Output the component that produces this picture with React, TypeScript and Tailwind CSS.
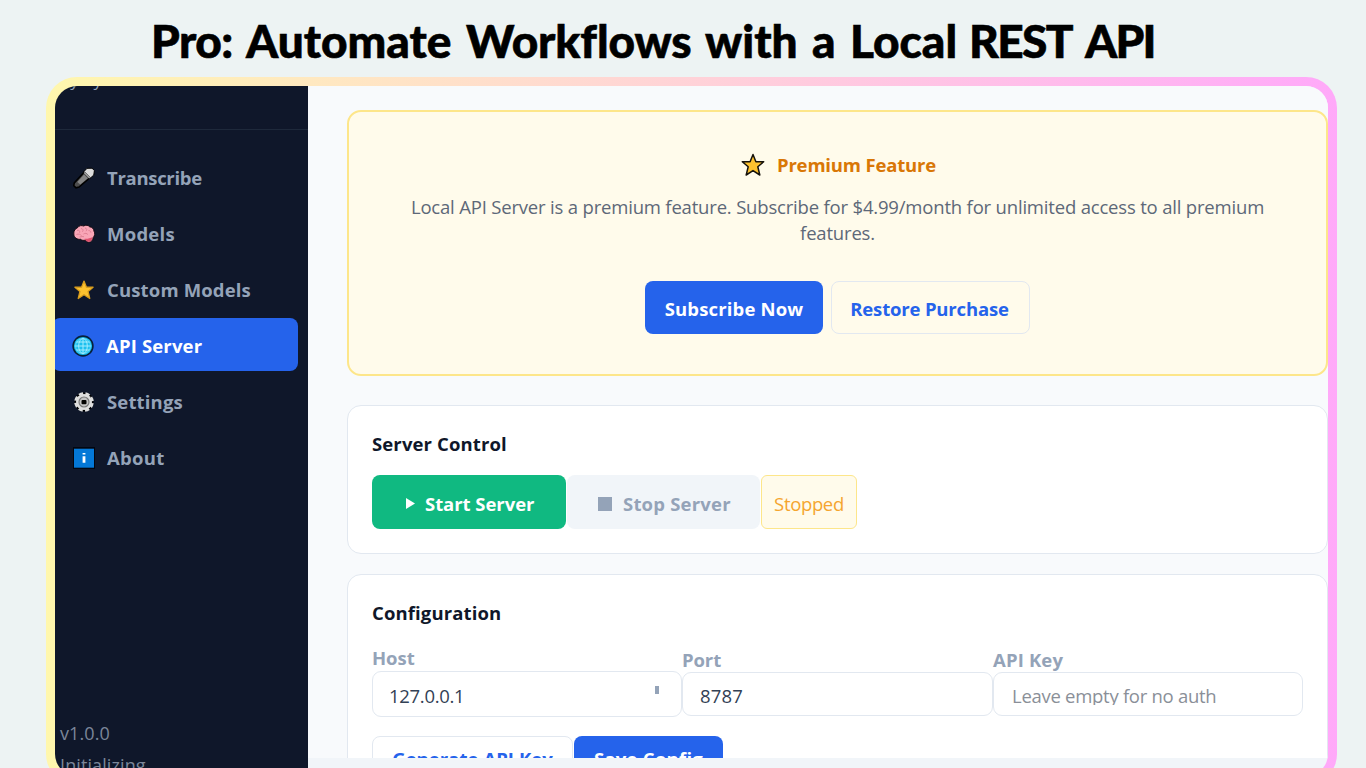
import { ReactNode } from "react"

const MicIcon = () => (
  <svg width="22" height="22" viewBox="0 0 22 22">
    <path d="M11 5.500 16.500 11 6 20l-3 .8-2.300-2.200.6-2.600z" fill="#4c4c4c" stroke="#000" strokeWidth="1.600" />
    <path d="m11 7.500 3.800 3.800-7.500 6.200L4.300 15z" fill="#858585" />
    <path
      d="m11 4.500 6.500 6.500 3.300-3 .6-4.500L19 1.200l-5 .1z"
      fill="#dcdcdc"
      stroke="#000"
      strokeWidth="1"
    />
    <path d="m11.200 5.500 5.500 5.500" stroke="#a5a5a5" strokeWidth="1.600" />
  </svg>
)

const BrainIcon = () => (
  <svg width="22" height="22" viewBox="0 0 22 22">
    <path
      d="M.8 11C.4 8 2.300 5.500 4.800 4.500c1-2 4-2.300 5.700-1.500C13 1.600 15.500 2.300 16.500 3.700c2.900.5 4.600 2.500 4.500 4.500 1.300 2 .8 4.700-.8 6.300-.2 2.800-2.200 4.800-4.400 4.800-1.500 0-2.400-1.200-3.200-2.300-2 .8-4 .3-5-.7-3 .4-6.800-1.300-6.800-5.300z"
      fill="#f9a5b6"
      stroke="#170b12"
      strokeWidth="1"
    />
    <path d="M11.500 15.700c2.500.5 5.500-.5 8-1.500-.3 2.500-1.500 4.600-4 4.600-1.500 0-3-1.500-4-3.100z" fill="#e0526f" />
    <path
      d="M4 7.500c2-.8 3 .3 2.600 2.200M8 5.500c2 .3 2.600 1.800 1.500 3.200M12 5c2 .5 2.200 2 1 3.200M3.500 11.500c2-.8 4-.3 5 1.200M10.500 11c1.500-1 3.500-.8 4.400.6M15.500 7.500c1.500 0 2.400.8 2.400 2.200M6.500 14c2-.2 3-.8 4.500-.2"
      fill="none"
      stroke="#df8094"
      strokeWidth="1"
    />
  </svg>
)

const StarIcon = ({ outline = "#16130c", className }: { outline?: string; className?: string }) => (
  <svg width="24" height="24" viewBox="0 0 24 24" className={className}>
    <path
      d="m12 1.500 2.900 7.200h7.800l-5.900 5 2 8.300-6.800-4.400L5.200 22l2-8.300-5.900-5h7.800z"
      fill="#fdc22f"
      stroke={outline}
      strokeWidth="1.500"
      strokeLinejoin="round"
    />
  </svg>
)

const GlobeIcon = () => (
  <svg width="22" height="22" viewBox="0 0 22 22">
    <circle cx="11" cy="11" r="9.900" fill="#1cc0ef" stroke="#07213a" strokeWidth="1.600" />
    <g fill="none" stroke="#a3ecfd" strokeWidth="1">
      <path d="M11 3.500v15M3.500 11h15M4.500 7h13M4.500 15h13" />
      <ellipse cx="11" cy="11" rx="4.300" ry="7.500" />
      <circle cx="11" cy="11" r="7.500" strokeOpacity=".5" />
    </g>
  </svg>
)

const GearIcon = () => (
  <svg width="22" height="22" viewBox="0 0 22 22">
    <circle cx="11" cy="11" r="9.600" fill="#000" />
    <circle
      cx="11"
      cy="11"
      r="8.500"
      fill="none"
      stroke="#dedede"
      strokeWidth="2.600"
      strokeDasharray="4.300 2.376"
      strokeDashoffset="-1.200"
    />
    <circle cx="11" cy="11" r="8" fill="#dedede" />
    <circle cx="11" cy="11" r="5" fill="#c4c4c4" stroke="#7a7a7a" strokeWidth="1.200" />
    <rect x="8.500" y="9" width="5" height="4.200" rx="1" fill="#000" />
  </svg>
)

const InfoIcon = () => (
  <svg width="22" height="22" viewBox="0 0 22 22">
    <path d="M0 0h22v22H0z" fill="#020610" />
    <path d="M1 1.700h20v19H1z" fill="#0478d7" />
    <path d="M9.600 6h2.800v1.500H9.600zM9.600 9.200h2.800v6.600H9.600z" fill="#fff" />
  </svg>
)

const navItems: { label: string; icon: ReactNode; active?: boolean; tracking: string }[] = [
  { label: "Transcribe", icon: <MicIcon />, tracking: "tracking-[-0.3px]" },
  { label: "Models", icon: <BrainIcon />, tracking: "tracking-[0.25px]" },
  { label: "Custom Models", icon: <StarIcon outline="#d79c1d" className="-mx-px scale-[0.85]" />, tracking: "tracking-[0.15px]" },
  { label: "API Server", icon: <GlobeIcon />, active: true, tracking: "tracking-[0.15px]" },
  { label: "Settings", icon: <GearIcon />, tracking: "tracking-[0.15px]" },
  { label: "About", icon: <InfoIcon />, tracking: "tracking-[0.3px]" },
]

const Sidebar = () => (
  <aside className="flex w-[253px] shrink-0 flex-col bg-[#0f172a]">
    <div className="h-[44px] shrink-0 overflow-hidden border-b border-[#1e293b]">
      <p className="-mt-[16px] text-[17px] leading-5 text-[#94a3b8]">My Py</p>
    </div>
    <nav className="mt-[20px] flex flex-col gap-[3px]">
      {navItems.map((item) => (
        <div
          key={item.label}
          className={
            item.active
              ? "-ml-[3px] mr-[10px] flex h-[53px] items-center gap-3 rounded-lg bg-[#2563eb] pt-0.5 pl-5 text-white"
              : "flex h-[53px] items-center gap-3 pt-0.5 pl-[18px] text-[#94a3b8]"
          }
        >
          {item.icon}
          <span className={`text-[18.5px] leading-6 font-bold whitespace-nowrap ${item.tracking}`}>
            {item.label}
          </span>
        </div>
      ))}
    </nav>
    <div className="mt-[234px] pl-[5px] text-[18px] leading-8 text-[#7b8699]">
      <p className="tracking-[0.1px]">v1.0.0</p>
      <p className="tracking-[0.1px]">Initializing</p>
    </div>
  </aside>
)

const Card = ({ title, className, children }: { title: string; className?: string; children: ReactNode }) => (
  <section className={`w-[981px] rounded-[14px] border border-[#e2e8f0] bg-white px-6 ${className}`}>
    <h2 className="text-[18.5px] leading-6 font-bold tracking-[0.12px] text-[#0f172a]">{title}</h2>
    {children}
  </section>
)

const PremiumBanner = () => (
  <section className="flex h-[266px] w-[981px] shrink-0 flex-col items-center rounded-[14px] border-2 border-[#fde68a] bg-[#fffbeb] pt-[41px]">
    <div className="flex h-6 items-center gap-3 pl-0.5 text-[#d97706]">
      <StarIcon />
      <span className="text-[18.5px] font-bold tracking-[-0.17px]">Premium Feature</span>
    </div>
    <p className="mt-[17px] text-center text-[18.5px] leading-[26px] tracking-[-0.185px] text-[#5d6878]">
      Local API Server is a premium feature. Subscribe for $4.99/month for unlimited access to all premium
      <br />
      features.
    </p>
    <div className="mt-[35px] flex gap-2 text-[18.5px] font-bold">
      <button className="h-[53px] w-[178px] rounded-lg bg-[#2563eb] pt-0.5 tracking-[0.15px] text-white">
        Subscribe Now
      </button>
      <button className="h-[53px] w-[199px] rounded-lg border border-[#e2e8f0] pt-0.5 pr-0.5 tracking-[-0.17px] text-[#2563eb]">
        Restore Purchase
      </button>
    </div>
  </section>
)

const ServerControl = () => (
  <Card title="Server Control" className="mt-[29px] h-[149px] shrink-0 pt-[26px]">
    <div className="mt-[19px] flex h-[54px] text-[18.5px] font-bold">
      <button className="flex w-[194px] items-center rounded-lg bg-[#10b981] pt-[3px] pl-[33px] tracking-[-0.05px] whitespace-nowrap text-white">
        <svg width="11" height="13" viewBox="0 0 11 13" className="mr-[9px]">
          <path d="M1 1v11l9-5.500z" fill="currentColor" />
        </svg>
        Start Server
      </button>
      <button className="ml-px flex w-[193px] items-center rounded-lg bg-[#f1f5f9] pt-[3px] pl-[31px] tracking-[0.2px] whitespace-nowrap text-[#94a3b8]">
        <span className="mr-[11px] size-[14px] bg-[#94a3b8]" />
        Stop Server
      </button>
      <span className="ml-px flex w-[96px] items-center justify-center rounded-md border border-[#fde68a] bg-[#fffbeb] pt-[3px] font-normal tracking-[-0.35px] text-[#f5a52f]">
        Stopped
      </span>
    </div>
  </Card>
)

const fieldClass = "flex items-center rounded-[9px] border border-[#e2e8f0] text-[18.5px]"
const labelClass = "text-[18.5px] leading-6 font-bold text-[#94a3b8]"

const Configuration = () => (
  <Card title="Configuration" className="mt-5 h-[230px] shrink-0 pt-[26px]">
    <div className="mt-[21px] flex">
      <div className="w-[310px]">
        <div className={`${labelClass} tracking-[-0.05px]`}>Host</div>
        <div className={`${fieldClass} mt-px h-[46px] justify-between pr-[22px] pl-4 tracking-[-0.3px] text-[#334155]`}>
          <span className="pt-1">127.0.0.1</span>
          <span className="mb-2 h-2 w-1 bg-[#94a3b8]" />
        </div>
      </div>
      <div className="w-[311px] pt-0.5">
        <div className={`${labelClass} tracking-[-0.1px]`}>Port</div>
        <div className={`${fieldClass} h-[44px] pt-[3px] pl-[17px] tracking-[0.2px] text-[#334155]`}>8787</div>
      </div>
      <div className="w-[310px] pt-0.5">
        <div className={`${labelClass} tracking-[0.15px]`}>API Key</div>
        <div className={`${fieldClass} h-[44px] pt-0.5 pl-[18px] tracking-[-0.28px] text-[#8a8f98]`}>
          <span className="block h-[20px] overflow-hidden leading-[22px]">Leave empty for no auth</span>
        </div>
      </div>
    </div>
    <div className="mt-[19px] flex gap-px text-[18.5px] font-bold">
      <button className="h-[46px] w-[201px] rounded-lg border border-[#e2e8f0] tracking-[0.05px] text-[#2563eb]">
        Generate API Key
      </button>
      <button className="h-[46px] w-[149px] rounded-lg bg-[#2563eb] tracking-[0.25px] text-white">Save Config</button>
    </div>
  </Card>
)

export default function App() {
  return (
    <div className="h-screen w-full overflow-hidden bg-[#edf3f3] font-['Open_Sans','Noto_Sans',sans-serif]">
      <header className="flex h-[77px] items-center pt-[5px] pl-[151px]">
        <h1 className="flex font-['Lato',sans-serif] text-[46px] leading-none font-black whitespace-nowrap text-black [-webkit-text-stroke:0.6px_#000] [font-variant-ligatures:none]">
          <span className="w-[95px] tracking-[-0.5px]">Pro: </span>
          <span className="w-[220px]">Automate </span>
          <span className="w-[239px] tracking-[-0.1px]">Workflows </span>
          <span className="w-[107px]">with </span>
          <span className="w-[38px] tracking-[1px]">a </span>
          <span className="w-[119px]">Local </span>
          <span className="w-[116px] tracking-[-1.6px]">REST </span>
          <span className="tracking-[-1.8px]">API</span>
        </h1>
      </header>
      <div className="ml-[46px] h-[708px] w-[1291px] rounded-[31px] bg-linear-to-r from-[#fff7ad] to-[#ffa9f9] p-[9px]">
        <div className="flex h-full overflow-hidden rounded-[22px]">
          <Sidebar />
          <div className="flex flex-1 flex-col bg-[#f1f5f9]">
            <main className="flex h-[672px] flex-col overflow-hidden bg-[#f8fafc] pt-[24px] pl-[39px]">
              <PremiumBanner />
              <ServerControl />
              <Configuration />
            </main>
          </div>
        </div>
      </div>
    </div>
  )
}
